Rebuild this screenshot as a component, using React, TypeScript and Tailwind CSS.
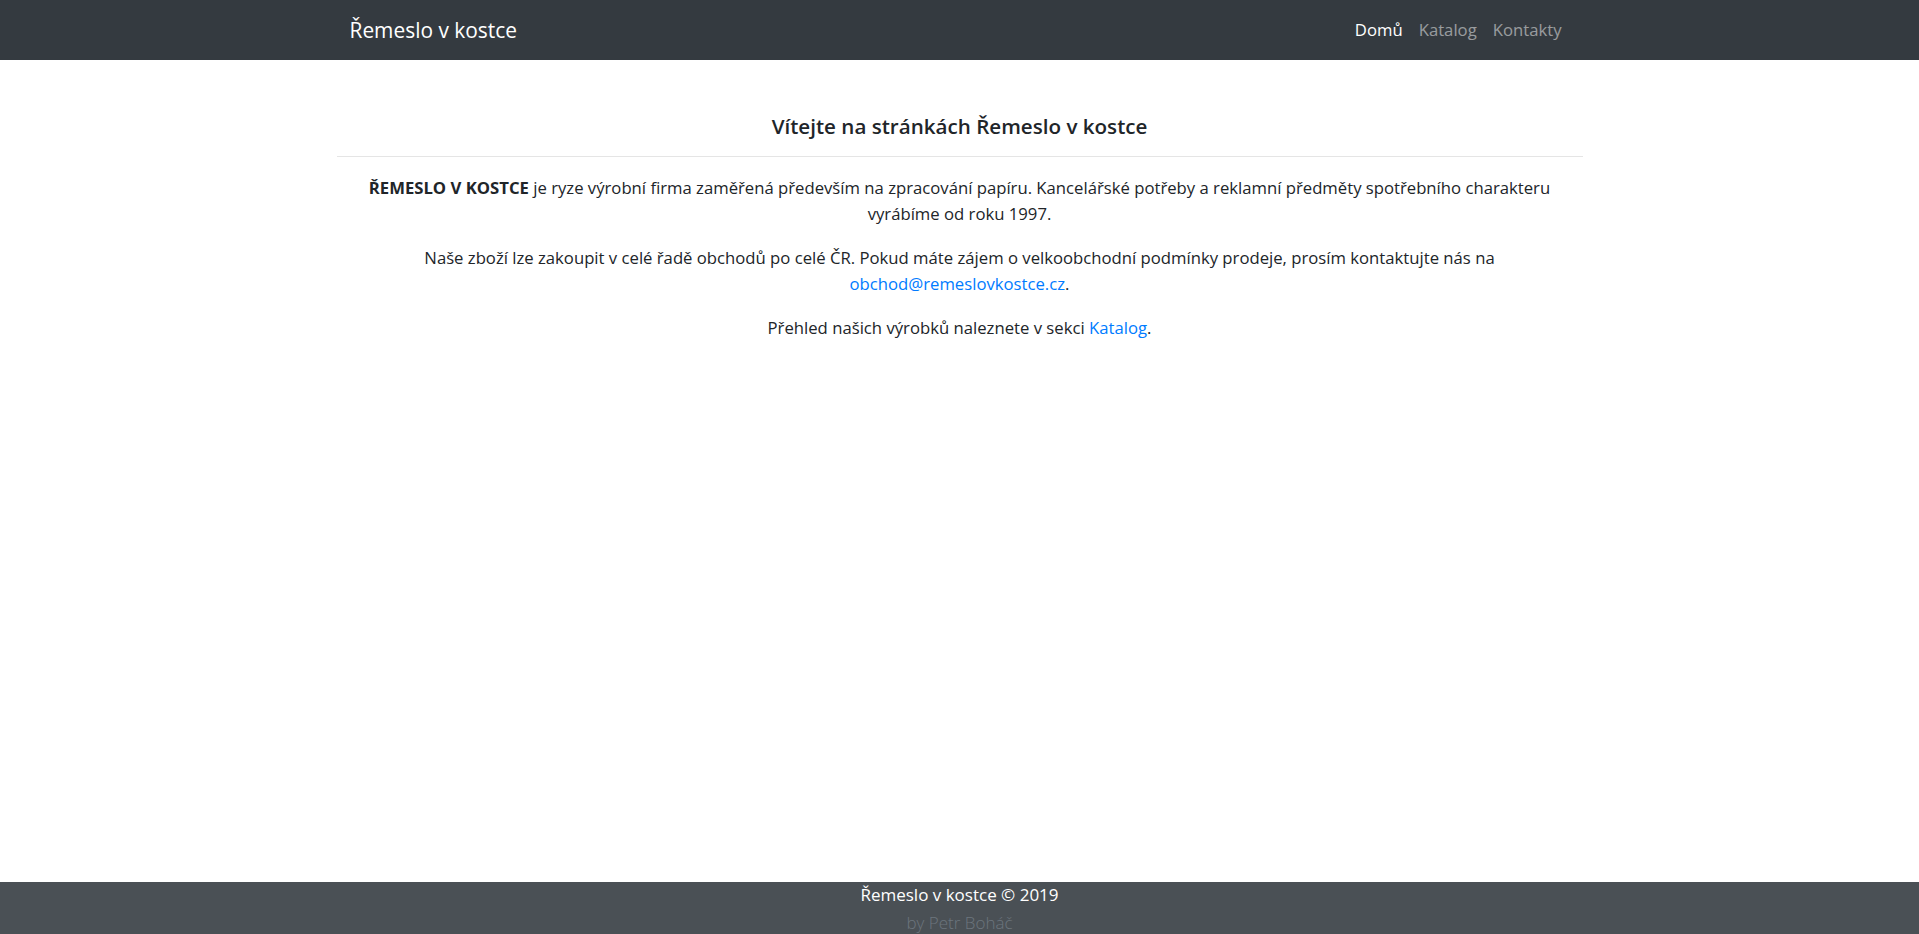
import React from "react";

const font = "font-['Segoe_UI','Open_Sans',sans-serif]";

export const App = () => {
  return (
    <div className={`${font} text-[#212529] bg-white`}>
      <nav className="bg-[#343a40] h-[60px]">
        <div className="w-[1220px] mx-auto h-full flex items-center justify-between">
          <a href="#" className="text-white text-[20.9px] leading-[30px]">
            Řemeslo v kostce
          </a>
          <ul className="flex text-[16.7px] leading-6">
            <li>
              <a href="#" className="block px-2 text-white">Domů</a>
            </li>
            <li>
              <a href="#" className="block px-2 text-white/50">Katalog</a>
            </li>
            <li>
              <a href="#" className="block px-2 text-white/50">Kontakty</a>
            </li>
          </ul>
        </div>
      </nav>

      <main className="min-h-[822px]">
        <div className="w-[1246px] mx-auto pt-[52px] text-center">
          <h4 className="text-[20.6px] leading-[29px] font-semibold">
            Vítejte na stránkách Řemeslo v kostce
          </h4>
          <hr className="mt-[15px] mb-[18px] border-0 border-t border-black/10" />
          <div className="px-[15px] text-[16.7px] leading-[26px]">
            <p className="mb-[18px]">
              <strong className="font-bold">ŘEMESLO V KOSTCE</strong> je ryze výrobní firma zaměřená
              především na zpracování papíru. Kancelářské potřeby a reklamní předměty spotřebního
              charakteru vyrábíme od roku 1997.
            </p>
            <p className="mb-[18px]">
              Naše zboží lze zakoupit v celé řadě obchodů po celé ČR. Pokud máte zájem o velkoobchodní
              podmínky prodeje, prosím kontaktujte nás na{" "}
              <a href="#" className="text-[#007bff]">obchod@remeslovkostce.cz</a>.
            </p>
            <p className="mb-[18px]">
              Přehled našich výrobků naleznete v sekci{" "}
              <a href="#" className="text-[#007bff]">Katalog</a>.
            </p>
          </div>
        </div>
      </main>

      <footer className="bg-[#4a5055] text-center pt-px pb-4 text-[17px] leading-6">
        <div className="text-white">Řemeslo v kostce © 2019</div>
        <div className="text-[#6c757d] mt-1 font-light">by Petr Boháč</div>
      </footer>
    </div>
  );
};

export default App;
